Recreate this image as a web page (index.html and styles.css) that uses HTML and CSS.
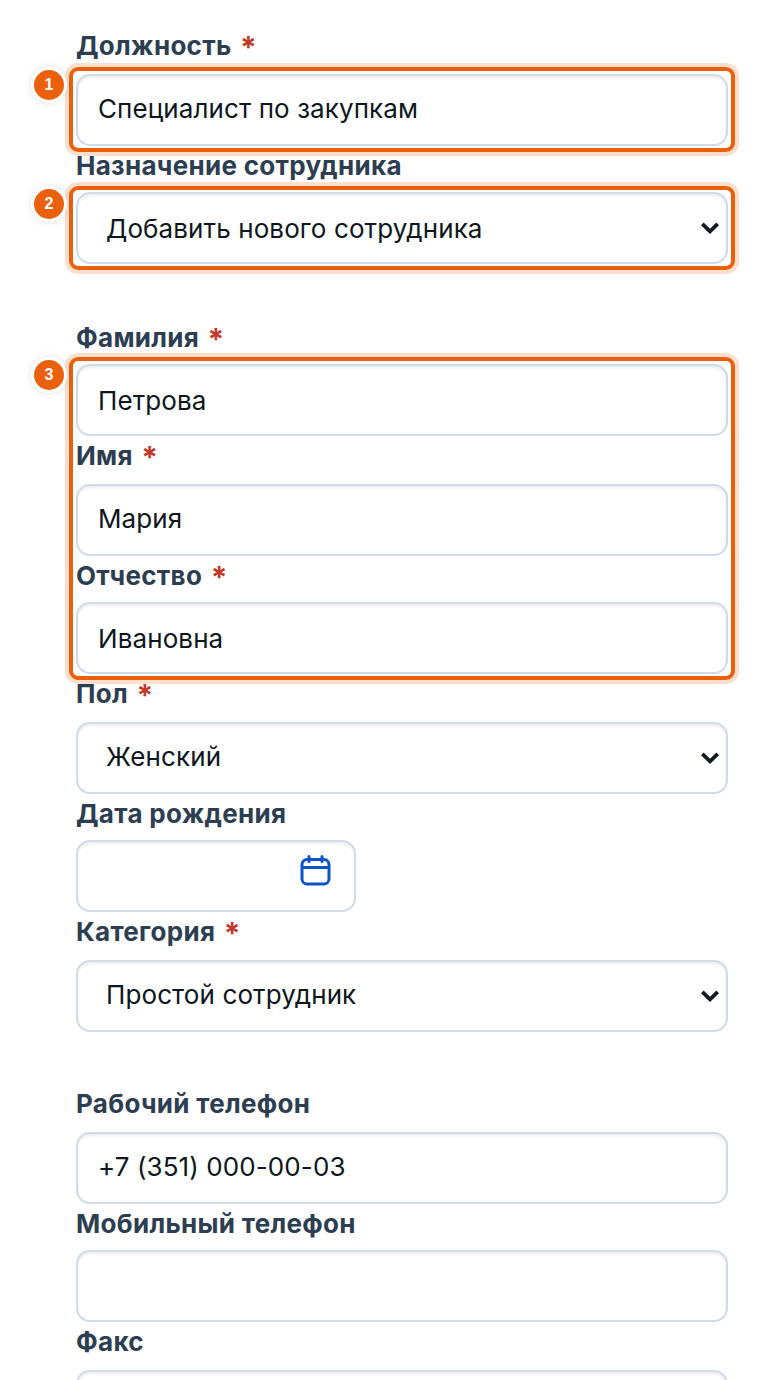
FILE: index.html
```html
<!DOCTYPE html>
<html lang="ru">
<head>
    <meta charset="UTF-8">
    <title>Сотрудник</title>
    <link rel="stylesheet" href="styles.css">
</head>
<body>
    <form class="form">
        <label class="label tall">Должность <span class="req">*</span></label>
        <div class="hl hl-one">
            <span class="badge">1</span>
            <input class="field field-up" type="text" value="Специалист по закупкам">
        </div>

        <label class="label">Назначение сотрудника</label>
        <div class="hl hl-two">
            <span class="badge">2</span>
            <select class="field select">
                <option>Добавить нового сотрудника</option>
            </select>
        </div>

        <label class="label section-a">Фамилия <span class="req">*</span></label>
        <div class="hl hl-three">
            <span class="badge">3</span>
            <input class="field" type="text" value="Петрова">
            <label class="label tall">Имя <span class="req">*</span></label>
            <input class="field field-up" type="text" value="Мария">
            <label class="label">Отчество <span class="req">*</span></label>
            <input class="field" type="text" value="Ивановна">
        </div>

        <label class="label tall">Пол <span class="req">*</span></label>
        <select class="field select field-up">
            <option>Женский</option>
        </select>

        <label class="label">Дата рождения</label>
        <div class="field date">
            <svg class="cal" viewBox="0 0 32 32" width="32" height="32" fill="none" stroke="#0b55c9" stroke-width="3">
                <rect x="2" y="4.500" width="27" height="24.500" rx="5"/>
                <path d="M2 12.500h27"/>
                <path d="M9 1.500v5M22 1.500v5" stroke-linecap="round"/>
            </svg>
        </div>

        <label class="label tall">Категория <span class="req">*</span></label>
        <select class="field select field-up">
            <option>Простой сотрудник</option>
        </select>

        <label class="label tall section-b">Рабочий телефон</label>
        <input class="field field-up" type="text" value="+7 (351) 000-00-03">

        <label class="label">Мобильный телефон</label>
        <input class="field" type="text">

        <label class="label tall">Факс</label>
        <input class="field" type="text">
    </form>
</body>
</html>
```

FILE: styles.css
```css
* {
    box-sizing: border-box;
    margin: 0;
    padding: 0;
}

body {
    background: #fff;
    font-family: Inter, "Noto Sans", sans-serif;
    height: 1380px;
    overflow: hidden;
}

.form {
    padding: 26px 32px 0 76px;
}

.label {
    display: block;
    height: 46px;
    padding-top: 3px;
    font-size: 26px;
    line-height: 34px;
    font-weight: 700;
    letter-spacing: 0.3px;
    color: #2c3e50;
}

.label.tall {
    height: 48px;
}

.section-a {
    margin-top: 54px;
}

.section-b {
    margin-top: 52px;
}

.req {
    color: #c0392b;
    font-size: 30px;
    line-height: 20px;
    margin-left: 2px;
    vertical-align: -3px;
}

.field {
    display: block;
    width: 100%;
    height: 72px;
    padding: 0 20px;
    background: #fff;
    border: 2px solid #d0dbe8;
    border-radius: 14px;
    box-shadow: inset 0 2px 3px rgba(0, 0, 0, 0.08);
    font-family: inherit;
    font-size: 26px;
    letter-spacing: 0.1px;
    color: #0e1620;
}

.select {
    appearance: none;
    padding: 0 8px 0 28px;
    background-image: url("data:image/svg+xml,%3Csvg xmlns='http://www.w3.org/2000/svg' width='18' height='12' fill='none' stroke='%23131a24' stroke-width='3.800'%3E%3Cpath d='M1.300 1.800L9 9.300l7.700-7.500'/%3E%3C/svg%3E");
    background-repeat: no-repeat;
    background-position: right 7px center;
}

.field-up {
    padding-bottom: 3px;
}

.hl-two .select {
    padding-top: 1px;
}

.date {
    width: 280px;
    display: flex;
    justify-content: flex-end;
    align-items: center;
    padding-right: 22px;
}

.cal {
    margin-top: -10px;
}

.hl {
    position: relative;
}

.hl::after {
    content: "";
    position: absolute;
    left: -7px;
    right: -7px;
    top: -7px;
    bottom: -6px;
    border: 4px solid #eb600c;
    border-radius: 9px;
    box-shadow: 0 0 0 4px rgba(235, 96, 12, 0.2);
    pointer-events: none;
}

.hl-two::after {
    top: -6px;
}

.badge {
    position: absolute;
    left: -42px;
    top: -4px;
    width: 30px;
    height: 30px;
    border-radius: 50%;
    background: #eb600c;
    box-shadow: 0 0 0 3px #fff, 0 0 8px 3px rgba(0, 0, 0, 0.12);
    color: #fff;
    font-family: "Liberation Sans", Arial, sans-serif;
    font-size: 16px;
    font-weight: 700;
    line-height: 30px;
    text-align: center;
    z-index: 1;
}

.hl-two .badge {
    top: -3px;
}
```
